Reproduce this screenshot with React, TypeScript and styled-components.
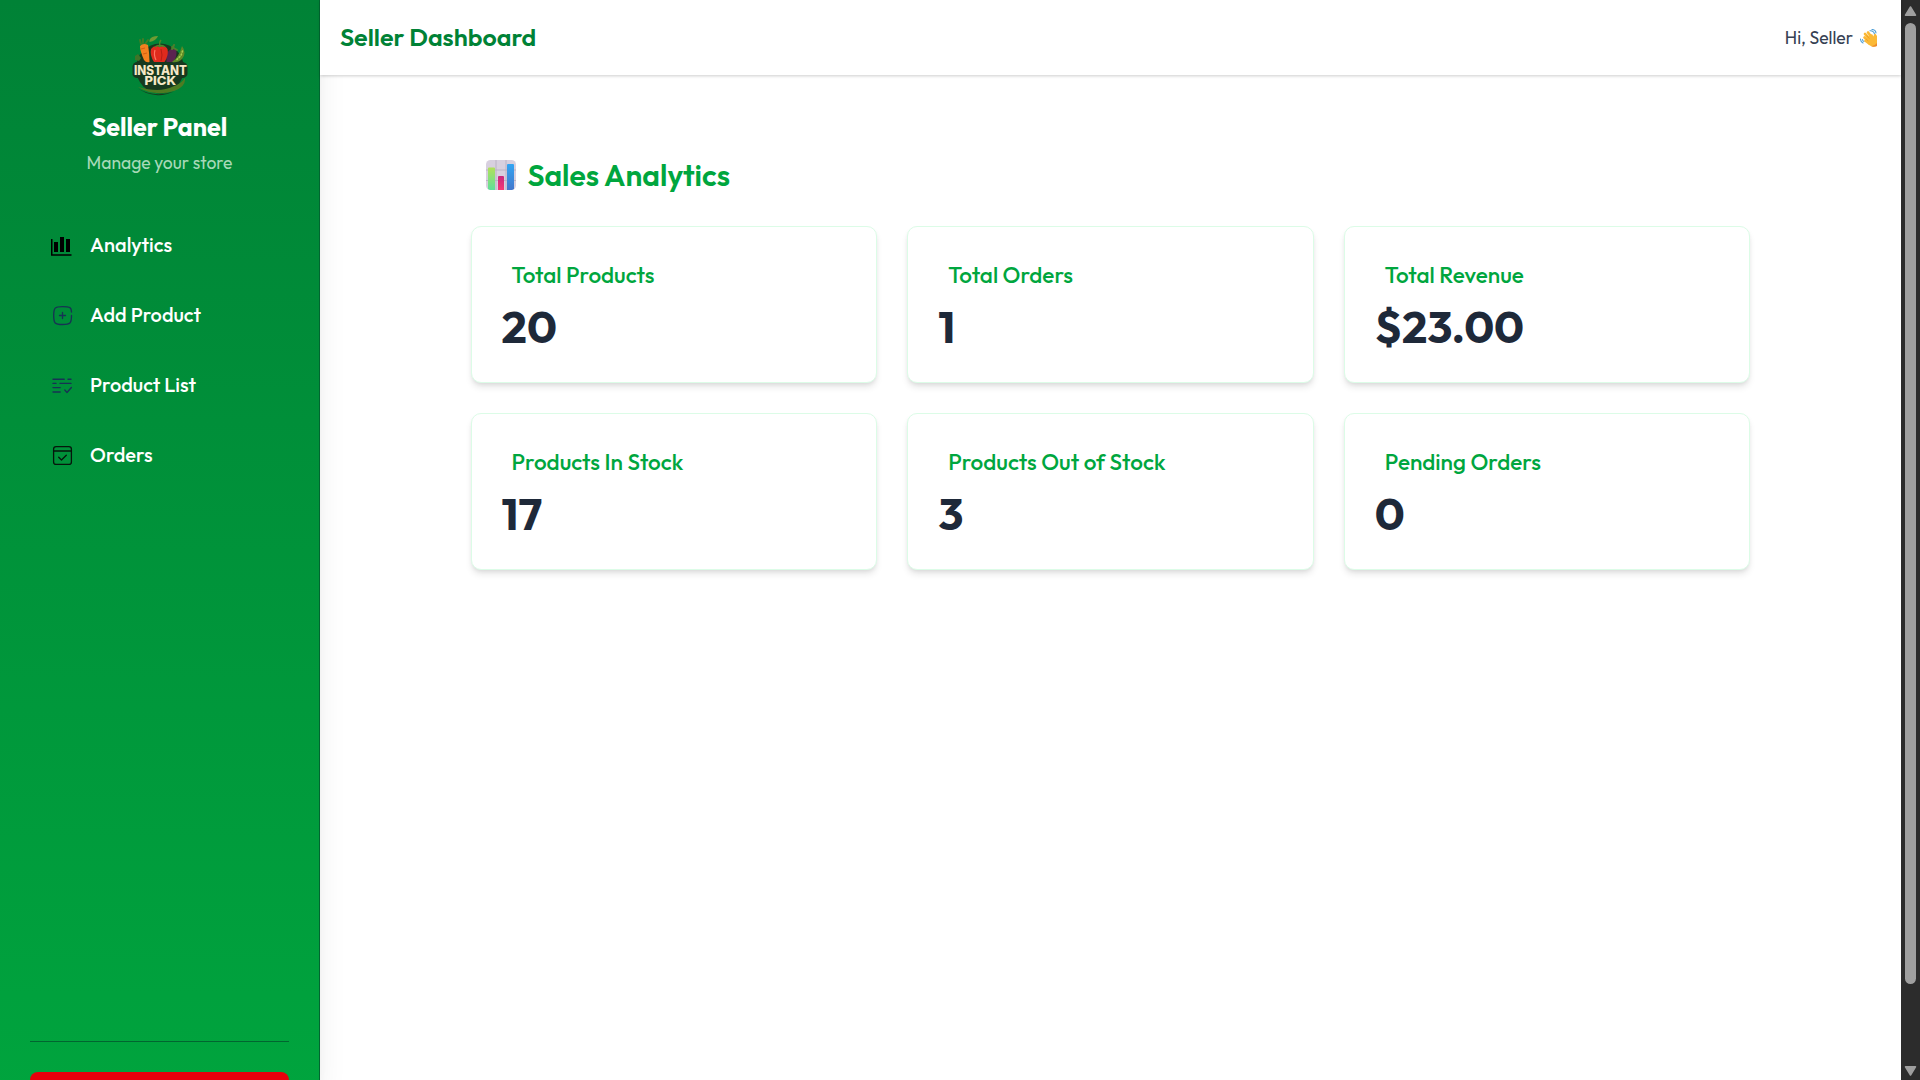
import React from "react";
import styled, { createGlobalStyle } from "styled-components";

const GlobalStyle = createGlobalStyle`
  *, *::before, *::after { box-sizing: border-box; }
  body {
    margin: 0;
    overflow: hidden;
    background: #fff;
    font-family: Outfit, Lato, "Open Sans", sans-serif;
  }
  h1, h2, h3, p { margin: 0; }
`;

const Page = styled.div`
  display: flex;
  width: 100%;
  height: 1080px;
  overflow: hidden;
`;

const SidebarShade = styled.div`
  display: flex;
  flex: none;
  z-index: 1;
  box-shadow: 0 25px 31px -6px rgba(0, 0, 0, 0.1), 0 10px 12.5px -7.5px rgba(0, 0, 0, 0.1);
`;

const Sidebar = styled.aside`
  display: flex;
  flex: none;
  flex-direction: column;
  width: 320px;
  padding: 32px 30px 0;
  overflow: hidden;
  border-right: 1px solid #016630;
  background: linear-gradient(to bottom in oklab, #008236, #00a63e 1152px);
`;

const Brand = styled.div`
  display: flex;
  flex-direction: column;
  align-items: center;
`;

const BrandTitle = styled.h2`
  margin-top: 15px;
  color: #fff;
  font-size: 25px;
  font-weight: 700;
  line-height: 32px;
`;

const BrandNote = styled.p`
  margin-top: 6px;
  color: #a7d9b8;
  font-size: 17.5px;
  line-height: 28px;
`;

const Nav = styled.nav`
  display: flex;
  flex-direction: column;
  margin-top: 33px;
`;

const NavItem = styled.a`
  display: flex;
  align-items: center;
  gap: 16px;
  height: 70px;
  padding-left: 20px;
  color: #fff;
  font-size: 20px;
  font-weight: 500;
  line-height: 30px;
`;

const SidebarFooter = styled.div`
  display: flex;
  height: 39px;
  margin-top: auto;
  padding-top: 30px;
  overflow: hidden;
  border-top: 1px solid #016630;
`;

const LogoutButton = styled.button`
  flex: 1;
  height: 50px;
  border: 0;
  border-radius: 8px;
  background: #e7000b;
`;

const Content = styled.div`
  display: flex;
  flex: 1;
  flex-direction: column;
  min-width: 0;
`;

const Header = styled.header`
  z-index: 2;
  display: flex;
  flex: none;
  align-items: center;
  justify-content: space-between;
  height: 75px;
  padding: 0 24px 0 20px;
  background: #fff;
  box-shadow: 0 1.25px 3.75px rgba(0, 0, 0, 0.1), 0 1.5px 2.5px -0.5px rgba(0, 0, 0, 0.1);
`;

const HeaderTitle = styled.h1`
  padding-bottom: 1px;
  color: #008236;
  font-size: 25px;
  font-weight: 600;
  line-height: 36px;
`;

const Greeting = styled.div`
  display: flex;
  align-items: center;
  gap: 7px;
  color: #364153;
  font-size: 17.5px;
  line-height: 28px;
`;

const Main = styled.main`
  width: 1280px;
  margin: 0 auto;
  padding-top: 80px;
`;

const SectionTitle = styled.h2`
  display: flex;
  align-items: center;
  gap: 12px;
  padding-left: 15px;
  color: #00a63e;
  font-size: 30px;
  font-weight: 600;
  line-height: 40px;
`;

const CardGrid = styled.div`
  display: grid;
  grid-template-columns: repeat(3, 1fr);
  gap: 30px;
  margin-top: 31px;
`;

const Card = styled.section`
  height: 157px;
  padding: 32px 30px 29px;
  border: 1px solid #dcfce7;
  border-radius: 10px;
  background: #fff;
  box-shadow: 0 5px 7.5px -1.25px rgba(0, 0, 0, 0.1), 0 2.5px 5px -2.5px rgba(0, 0, 0, 0.1);
`;

const CardLabel = styled.h3`
  padding-left: 10px;
  color: #00a63e;
  font-size: 22.5px;
  font-weight: 500;
  line-height: 32px;
`;

const CardValue = styled.p`
  margin-top: 10px;
  color: #1e2939;
  font-size: 45px;
  font-weight: 700;
  line-height: 52px;
`;

const Scrollbar = styled.div`
  display: flex;
  flex: none;
  flex-direction: column;
  align-items: center;
  width: 19px;
  padding: 6px 0 4px;
  background: #2c2c2c;
`;

const Thumb = styled.div`
  width: 11px;
  height: 961px;
  margin: 7px 0 auto;
  border-radius: 6px;
  background: #9f9f9f;
`;

const Logo = () => (
  <svg width="64" height="64" viewBox="0 0 64 64">
    <ellipse cx="32" cy="36.500" rx="24" ry="25" fill="#17391f" />
    <path d="M8 30 Q5 31 4.500 34 V43 Q6 46 9 46 H55 Q59 45 59.500 42 V34 Q59 31 55 30 Z" fill="#17391f" />
    <path d="M21.500 8 Q23 4 30 4 Q28 9 21.500 10 Z" fill="#6f9b32" />
    <path d="M13 12 L12 8 M15 11 V7 M17 12 L20 8" stroke="#3f7d27" strokeWidth="2" strokeLinecap="round" />
    <path d="M12 14 Q15 10.500 20 13 Q21.500 21 21.500 30 Q18 31 16 28 Q12 19 12 14 Z" fill="#f4801f" />
    <path d="M13 17 L17 16 M15 22 L19 21" stroke="#c9560f" strokeWidth="0.800" />
    <path d="M43 17 Q37 20 38.500 30 H45 Q50 24 48 17 Z" fill="#5b2350" />
    <path d="M44 17 L46 13 M44 15 L49 18" stroke="#4d7f2c" strokeWidth="2" strokeLinecap="round" />
    <path d="M54 14 Q59 21 54 27 Q50 31 44 30 Q51 25 54 14 Z" fill="#5d8a26" />
    <path d="M54.500 19 L53 23.500 L49 27.500" fill="none" stroke="#a6cc50" strokeWidth="1.600" strokeDasharray="1 2.200" strokeLinecap="round" />
    <path d="M23 17 Q26 12.500 31.500 14.500 Q37 12.500 39.500 17 Q41 23 36.500 30 H26 Q21.500 23 23 17 Z" fill="#e02a1d" />
    <path d="M27 18 Q25.500 23 28 28" fill="none" stroke="#ff7460" strokeWidth="1.200" />
    <path d="M33 17 Q35 23 33 29" fill="none" stroke="#b01c14" strokeWidth="0.900" />
    <path d="M27 15 Q30 12.500 31.500 14.500 Q34 12.500 37 15 M32 14 Q31 10 33 8" fill="none" stroke="#4a8829" strokeWidth="1.500" />
    <path d="M7 24 L10 22 L13 26 L11 29 L7 28 Z" fill="#3f7428" />
    <path d="M10 55 Q32 61 45 54.500 Q53 52 57 46 Q58 55 46 59 Q26 65 10 55 Z" fill="#4e7b22" />
    <path d="M10 56.500 Q26 66 46 59.500 Q36 64 28 63 Q18 62 10 56.500 Z" fill="#17391f" />
    <text fill="#f5e8c6" fontFamily="Inter, sans-serif" fontWeight="800">
      <tspan x="6" y="42.600" textLength="53" lengthAdjust="spacingAndGlyphs" fontSize="12.500">INSTANT</tspan>
      <tspan x="16.500" y="52.600" textLength="31.500" lengthAdjust="spacingAndGlyphs" fontSize="11.800">PICK</tspan>
    </text>
  </svg>
);

const AnalyticsIcon = () => (
  <svg width="24" height="24" viewBox="0 0 24 24" fill="#000">
    <path d="M1 6h1.500v15.200h19v1.500H1z" />
    <path d="M4 9h4v10H4zM10 4h4v15h-4zM16 6h4v13h-4z" />
  </svg>
);

const AddIcon = () => (
  <svg width="24" height="24" viewBox="0 0 24 24" fill="none" stroke="#173254" strokeWidth="1.350" strokeLinecap="round">
    <path d="M21.500 9C21.400 4.700 20.300 3.600 12.500 3.600C4.800 3.600 3.700 4.700 3.700 12.500S4.800 21.500 12.500 21.500S21.500 20.400 21.500 12.500M12.500 9.500v6M9.500 12.500h6" />
  </svg>
);

const ListIcon = () => (
  <svg width="24" height="24" viewBox="0 0 24 24" fill="none" stroke="#173254" strokeWidth="1.350" strokeLinecap="round" strokeLinejoin="round">
    <path d="M3 6.200h11.200M18 6.200h3M3 10.400h3M10 10.400h11M3 14.600h7.200M3 19h7.200M14.800 17l2.200 2.500l4.400-5" />
  </svg>
);

const OrdersIcon = () => (
  <svg width="24" height="24" viewBox="0 0 24 24" fill="none" stroke="#06160c" strokeWidth="1.300" strokeLinecap="round" strokeLinejoin="round">
    <rect x="3.600" y="3.600" width="17.800" height="17.800" rx="2.500" />
    <path d="M3.600 8h17.800M8.700 14.200l2.800 2.800l4.800-4.800" />
  </svg>
);

const ChartEmoji = () => (
  <svg width="30" height="30" viewBox="0 0 30 30">
    <defs>
      <linearGradient id="barLime" x2="0" y2="1"><stop stopColor="#b1e05a" /><stop offset="1" stopColor="#5fe09a" /></linearGradient>
      <linearGradient id="barPink" x2="0" y2="1"><stop stopColor="#c8287f" /><stop offset="1" stopColor="#f63a74" /></linearGradient>
      <linearGradient id="barBlue" x2="0" y2="1"><stop stopColor="#33a5f2" /><stop offset="1" stopColor="#4377cc" /></linearGradient>
    </defs>
    <rect width="30" height="30" rx="4.500" fill="#d8d0df" />
    <path d="M0 10h30M0 20.500h30M10 0v30M20 0v30" stroke="#b9b0c3" strokeWidth="0.900" />
    <path d="M2 8.500a1 1 0 0 1 1-1h5a1 1 0 0 1 1 1V30H4l-2-1z" fill="url(#barLime)" />
    <path d="M12 17a1 1 0 0 1 1-1h4a1 1 0 0 1 1 1v13h-6z" fill="url(#barPink)" />
    <path d="M21 5a1 1 0 0 1 1-1h5a1 1 0 0 1 1 1v24l-2 1h-5z" fill="url(#barBlue)" />
  </svg>
);

const WaveEmoji = () => (
  <svg width="17" height="18" viewBox="0 0 17 18">
    <path d="M10 1.800Q13.500 1.500 14.500 5M12 0.500Q15.500 0.500 16 4M0.500 10Q0.500 13 3 14M2.500 10.500Q2.500 12 4 12.500" fill="none" stroke="#4f9fd6" strokeWidth="1.100" strokeLinecap="round" />
    <path d="M5 5l5 5M8 3.500l4 5M4.500 8.500l5 4.500M5.500 11.800l4 3" stroke="#fbb936" strokeWidth="2.600" strokeLinecap="round" />
    <path d="M7 8l5-3 1.500 2.500Q13.500 4.500 15.500 4.700L17 7v10Q12 19 8 15z" fill="#fbb936" />
    <path d="M10 17Q14 18 17 14V17Q13 18.500 10 17Z" fill="#ee8b2c" />
    <path d="M6.500 6.500l3 3.200M5.800 9.800l2.500 2.300" stroke="#de8a1d" strokeWidth="0.500" />
  </svg>
);

const ScrollArrow = ({ down }: { down?: boolean }) => (
  <svg width="13" height="10" viewBox="0 0 13 10">
    <path
      d={down ? "M1.500 0.800h10L6.500 9z" : "M6.500 1l5 8.200h-10z"}
      fill="#9f9f9f"
      stroke="#9f9f9f"
      strokeWidth="1.500"
      strokeLinejoin="round"
    />
  </svg>
);

const navItems = [
  { label: "Analytics", icon: <AnalyticsIcon /> },
  { label: "Add Product", icon: <AddIcon /> },
  { label: "Product List", icon: <ListIcon /> },
  { label: "Orders", icon: <OrdersIcon /> },
];

const stats = [
  { label: "Total Products", value: "20" },
  { label: "Total Orders", value: "1" },
  { label: "Total Revenue", value: "$23.00" },
  { label: "Products In Stock", value: "17" },
  { label: "Products Out of Stock", value: "3" },
  { label: "Pending Orders", value: "0" },
];

export default function App() {
  return (
    <Page>
      <GlobalStyle />
      <SidebarShade>
        <Sidebar>
          <Brand>
            <Logo />
            <BrandTitle>Seller Panel</BrandTitle>
            <BrandNote>Manage your store</BrandNote>
          </Brand>
          <Nav>
            {navItems.map((item) => (
              <NavItem key={item.label}>
                {item.icon}
                {item.label}
              </NavItem>
            ))}
          </Nav>
          <SidebarFooter>
            <LogoutButton />
          </SidebarFooter>
        </Sidebar>
      </SidebarShade>
      <Content>
        <Header>
          <HeaderTitle>Seller Dashboard</HeaderTitle>
          <Greeting>
            Hi, Seller
            <WaveEmoji />
          </Greeting>
        </Header>
        <Main>
          <SectionTitle>
            <ChartEmoji />
            Sales Analytics
          </SectionTitle>
          <CardGrid>
            {stats.map((stat) => (
              <Card key={stat.label}>
                <CardLabel>{stat.label}</CardLabel>
                <CardValue>{stat.value}</CardValue>
              </Card>
            ))}
          </CardGrid>
        </Main>
      </Content>
      <Scrollbar>
        <ScrollArrow />
        <Thumb />
        <ScrollArrow down />
      </Scrollbar>
    </Page>
  );
}
